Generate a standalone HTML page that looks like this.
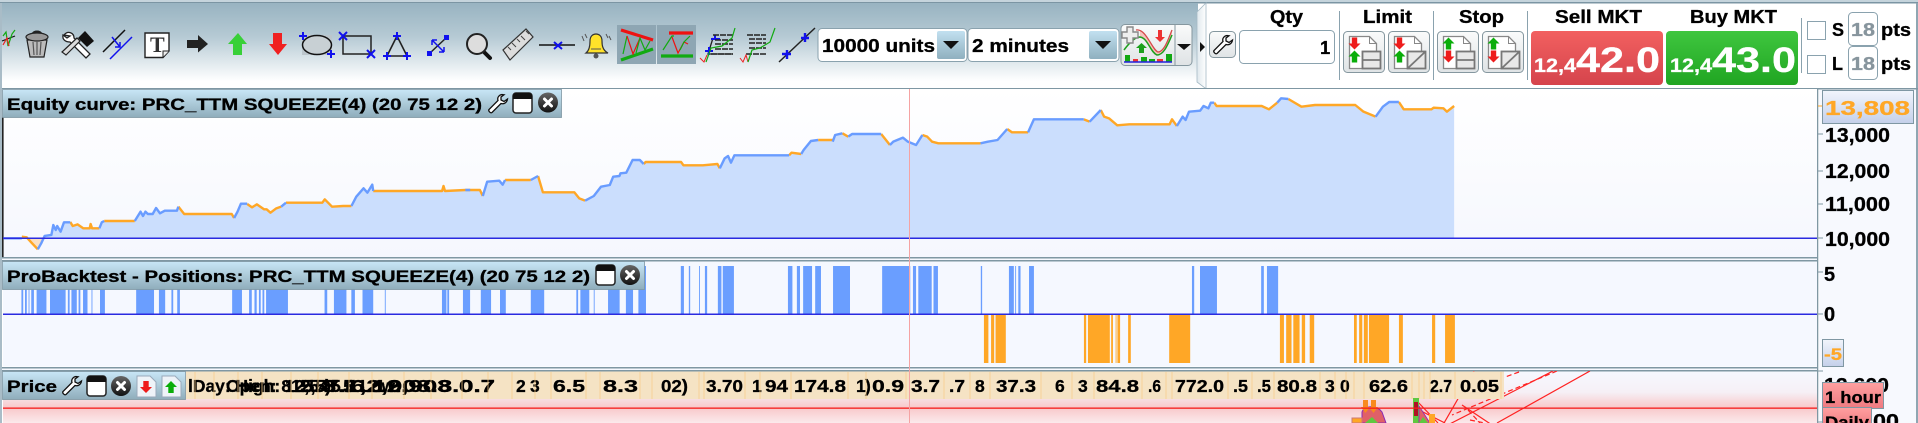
<!DOCTYPE html>
<html><head><meta charset="utf-8"><title>Equity curve</title>
<style>
html,body{margin:0;padding:0;background:#fff;width:1918px;height:423px;overflow:hidden}
svg{display:block}
text{font-family:"Liberation Sans",sans-serif;font-weight:bold;fill:#000;stroke:#000;stroke-width:.3}
</style></head><body>
<svg xmlns="http://www.w3.org/2000/svg" width="1918" height="423" viewBox="0 0 1918 423">
<defs>
<linearGradient id="tb" x1="0" y1="0" x2="0" y2="1"><stop offset="0" stop-color="#98b3c1"/><stop offset=".4" stop-color="#b6cad4"/><stop offset=".72" stop-color="#e3ebef"/><stop offset=".92" stop-color="#fff"/></linearGradient>
<linearGradient id="tt" x1="0" y1="0" x2="0" y2="1"><stop offset="0" stop-color="#c8e6f6"/><stop offset="1" stop-color="#8fadbb"/></linearGradient>
<linearGradient id="p1" x1="0" y1="0" x2="0" y2="1"><stop offset="0" stop-color="#fff"/><stop offset="1" stop-color="#f5f7fe"/></linearGradient>
<linearGradient id="p3" x1="0" y1="0" x2="0" y2="1"><stop offset="0" stop-color="#f6f8ff"/><stop offset=".4" stop-color="#f6f0f6"/><stop offset=".7" stop-color="#f8c8ca"/><stop offset="1" stop-color="#fbeaec"/></linearGradient>
<linearGradient id="sell" x1="0" y1="0" x2="0" y2="1"><stop offset="0" stop-color="#f26060"/><stop offset="1" stop-color="#d5444c"/></linearGradient>
<linearGradient id="buy" x1="0" y1="0" x2="0" y2="1"><stop offset="0" stop-color="#3fc63f"/><stop offset="1" stop-color="#20a522"/></linearGradient>
<linearGradient id="ax" x1="0" y1="0" x2="0" y2="1"><stop offset="0" stop-color="#f2f5fc"/><stop offset="1" stop-color="#c4d0ea"/></linearGradient>
<linearGradient id="hr" x1="0" y1="0" x2="0" y2="1"><stop offset="0" stop-color="#ffa0a0"/><stop offset="1" stop-color="#ee7a80"/></linearGradient>
<linearGradient id="btn" x1="0" y1="0" x2="0" y2="1"><stop offset="0" stop-color="#fafbfb"/><stop offset="1" stop-color="#dfe3e5"/></linearGradient>
<linearGradient id="sel" x1="0" y1="0" x2="0" y2="1"><stop offset="0" stop-color="#c2e0f0"/><stop offset="1" stop-color="#8fb0bf"/></linearGradient>
<linearGradient id="tab" x1="0" y1="0" x2="1" y2="0"><stop offset="0" stop-color="#dfe8ed"/><stop offset="1" stop-color="#fff"/></linearGradient>
<linearGradient id="ball" x1="0" y1="0" x2="0" y2="1"><stop offset="0" stop-color="#666"/><stop offset="1" stop-color="#111"/></linearGradient>
<clipPath id="pc"><rect x="3" y="371" width="1814" height="52"/></clipPath>

<g id="wrench"><path d="M15 1.5 C12 2 10 4.5 11 7.5 L2 16.5 C1 18 3.5 20.5 5 19.5 L14 10.5 C17 11.5 20 9.5 20.5 6 L17 8.5 L14 7 L14 4 L17 1.8 Z" fill="#fff" stroke="#111" stroke-width="1.3"/></g>
<g id="win"><rect x="1" y="1" width="19" height="20" rx="3" fill="#fff" stroke="#222" stroke-width="1.5"/><path d="M1 7V4a3 3 0 0 1 3-3h13a3 3 0 0 1 3 3v3z" fill="#111"/></g>
<g id="cls"><circle r="10" fill="url(#ball)"/><path d="M-3.5-3.5 3.5 3.5M3.5-3.5-3.5 3.5" stroke="#fff" stroke-width="3" stroke-linecap="round"/></g>
<g id="up"><path d="M0-6 6 0H2.7V6H-2.7V0H-6Z" fill="#0aad0a"/></g>
<g id="dn"><path d="M0 6 6 0H2.7V-6H-2.7V0H-6Z" fill="#ee1c1c"/></g>
<g id="docb"><rect x="0" y="0" width="41" height="41" rx="4" fill="url(#btn)" stroke="#85979f"/><path d="M6 5H26L33 12V20H19V37H6Z" fill="#fff" stroke="#888" stroke-width="1.3"/><path d="M26 5V12H33" fill="none" stroke="#888"/></g>
<g id="box1"><rect x="19" y="20" width="18" height="17" fill="#e8e8e8" stroke="#777" stroke-width="1.8"/><path d="M19 28.5H37" stroke="#777" stroke-width="1.8"/></g>
<g id="box2"><rect x="19" y="20" width="18" height="17" fill="#e8e8e8" stroke="#777" stroke-width="1.8"/><path d="M19 37 37 20" stroke="#777" stroke-width="1.8"/></g>
</defs>

<!-- toolbar -->
<rect x="0" y="0" width="1918" height="423" fill="#fff"/>
<rect x="0" y="0" width="1918" height="2" fill="#c5d4dc"/>
<rect x="0" y="2" width="1918" height="1.5" fill="#7b95a3"/>
<rect x="0" y="3" width="1198" height="85" fill="url(#tb)"/>
<rect x="0" y="3" width="2" height="420" fill="#a9bcc7"/>
<rect x="1916" y="3" width="2" height="420" fill="#8fa6b2"/>
<rect x="1819" y="88" width="97" height="335" fill="#f7f9fe"/>

<!-- icons -->
<path d="M2 41 15 36" stroke="#111" stroke-width="1.2"/><path d="M3 36 6 32 8 46 12 34 15 30" fill="none" stroke="#1a1" stroke-width="1.2"/><path d="M3 45 7 38 9 46" fill="none" stroke="#e22" stroke-width="1.2"/>
<g stroke="#222" stroke-width="1.2"><path d="M27 40 30 57H44L47 40Z" fill="#bbb"/><ellipse cx="37" cy="37" rx="11" ry="4" fill="#999"/><path d="M33 33.5A4 2 0 0 1 41 33.5" fill="none" stroke-width="2"/><path d="M33 42 34 55M37 42V55M41 42 40 55" stroke="#555"/></g>
<g><path d="M64 35C68 30 74 33 74 38L90 54 86 58 70 42C66 42 62 40 63 35L67 38 70 36Z" fill="#fff" stroke="#222" stroke-width="1.3"/><path d="M66 55 80 41 77 38 62 52Z" fill="#ddd" stroke="#222" stroke-width="1.2"/><path d="M78 38 85 31 94 41 87 47Z" fill="#111"/></g>
<path d="M103 52 125 30" stroke="#111" stroke-width="1.5"/><path d="M110 59 132 37" stroke="#11e" stroke-width="1.5"/><path d="M112 37 120 47M115 47H120V42" fill="none" stroke="#11e" stroke-width="1.5"/>
<path d="M145 33H169V51L163 57.5H145Z" fill="#fff" stroke="#222" stroke-width="1.4"/><path d="M163 57V51H169" fill="#eee" stroke="#222"/><text x="150" y="52" style="font-family:'Liberation Serif',serif;fill:#333;stroke:none" font-size="22">T</text>
<path d="M187 40H198V35L208 44 198 52.5V48H187Z" fill="#222"/>
<path d="M238 33 247 44H242V55H233V44H228Z" fill="#38d038"/>
<path d="M278 55 287 44H282V33H273V44H269Z" fill="#f02020"/>
<rect x="302" y="35" width="30" height="20" fill="#bcc6cc"/><ellipse cx="317" cy="45" rx="14.5" ry="9.5" fill="#c8d0d4" stroke="#111" stroke-width="1.5"/><path d="M299 36H307M303 32V40M327 54H335M331 50V58" stroke="#11e" stroke-width="2"/>
<rect x="343" y="36" width="28" height="18" fill="none" stroke="#222" stroke-width="1.5"/><path d="M339 32 347 40M347 32 339 40M367 50 375 58M375 50 367 58" stroke="#11e" stroke-width="2"/>
<path d="M397 36 387 56H407Z" fill="none" stroke="#222" stroke-width="1.6"/><path d="M393 36H401M397 32V40M383 56H391M387 52V60M403 56H411M407 52V60" stroke="#11e" stroke-width="2"/>
<path d="M430 53 446 38" stroke="#222" stroke-width="1.5"/><rect x="427" y="51" width="5" height="5" fill="#11e"/><rect x="444" y="35" width="5" height="5" fill="#11e"/><path d="M432 40 444 52M432 40V45M432 40H437M444 52V47M444 52H439" fill="none" stroke="#11e" stroke-width="1.5"/>
<path d="M484 52 490 58" stroke="#111" stroke-width="4" stroke-linecap="round"/><circle cx="477" cy="44" r="10" fill="#ddd" stroke="#222" stroke-width="2"/>
<path d="M503 50 526 29 533 37 510 60Z" fill="#ddd" stroke="#333" stroke-width="1.2"/><path d="M508 47 511 50M512 43 516 47M517 39 520 42M521 36 525 40M526 31 529 34" stroke="#444"/>
<path d="M539 45H575" stroke="#111" stroke-width="1.5"/><path d="M554 42 562 49M562 42 554 49" stroke="#11e" stroke-width="2"/>
<path d="M586 53C590 50 590 44 590 41C590 36 593 34 596 34C599 34 602 36 602 41C602 44 602 50 608 53Z" fill="#ffe22a" stroke="#333" stroke-width="1.2"/><circle cx="596" cy="56" r="2.5" fill="#555"/><path d="M591 49H601" stroke="#555"/><path d="M582 36 584 41M585 34 587 38M609 36 611 40M606 34 608 38" stroke="#555"/>
<rect x="617" y="25" width="39" height="39" fill="#8ea6b3"/><rect x="657" y="25" width="39" height="39" fill="#8ea6b3"/>
<path d="M621 30 653 40" stroke="#ee1111" stroke-width="3.2"/><path d="M621 60 653 49" stroke="#11aa11" stroke-width="3.2"/><path d="M623 54 627 36" stroke="#11aa11" stroke-width="1.2"/><path d="M627 36 633 54 640 38" fill="none" stroke="#ee1111" stroke-width="1.2"/><path d="M636 53 640 38 645 50 650 41" fill="none" stroke="#11aa11" stroke-width="1.2"/>
<path d="M669 33H693" stroke="#ee1111" stroke-width="3.2"/><path d="M661 56H693" stroke="#11aa11" stroke-width="3.2"/><path d="M663 50 672 36 674 36" fill="none" stroke="#11aa11" stroke-width="1.2"/><path d="M672 37 678 53 684 42 688 44" fill="none" stroke="#ee1111" stroke-width="1.2"/><path d="M680 50 684 42 690 36" fill="none" stroke="#11aa11" stroke-width="1.2"/>
<g><path d="M713 38 708 54H733" fill="none" stroke="#222" stroke-width="1.3"/><path d="M711 39H719M705 51H713M709 47V55M706 51H713" stroke="#11e" stroke-width="2"/><path d="M715 39V35M711 39H720" stroke="#11e" stroke-width="2"/><path d="M713 35H733M715 40H733M715 44H733M715 49H733M711 54H733" stroke="#222" stroke-width="1.4" stroke-dasharray="6 1"/><path d="M700 58 704 62 707 55" fill="none" stroke="#e22"/><path d="M706 62 711 48 722 46 732 38 735 28" fill="none" stroke="#1a1" stroke-width="1.2"/></g>
<g><path d="M747 35H766M749 39H766M749 43H766M749 48H766M746 54H767" stroke="#222" stroke-width="1.4" stroke-dasharray="6 1"/><path d="M740 58 743 62 746 55 748 62" fill="none" stroke="#e22"/><path d="M748 62 752 50 760 48 770 42 775 28" fill="none" stroke="#1a1" stroke-width="1.2"/></g>
<path d="M779 62 815 28" stroke="#222" stroke-width="1.5"/><path d="M782 54H791M787 50V59M801 38H809M805 33V42" stroke="#11e" stroke-width="2.4"/>

<!-- selects -->
<rect x="818" y="28.5" width="149" height="33" rx="4" fill="#fff" stroke="#8aa2ae"/>
<rect x="937" y="31" width="28" height="28" rx="2" fill="url(#sel)"/><path d="M943 41H959L951 49Z" fill="#111"/>
<text x="822" y="52" font-size="18.5" textLength="113" lengthAdjust="spacingAndGlyphs">10000 units</text>
<rect x="968" y="28.5" width="151" height="33" rx="4" fill="#fff" stroke="#8aa2ae"/>
<rect x="1089" y="31" width="28" height="28" rx="2" fill="url(#sel)"/><path d="M1095 41H1111L1103 49Z" fill="#111"/>
<text x="972" y="52" font-size="18.5" textLength="97" lengthAdjust="spacingAndGlyphs">2 minutes</text>
<rect x="1121" y="24.5" width="71" height="41" rx="4" fill="url(#btn)" stroke="#85979f"/><path d="M1175 25V65" stroke="#85979f"/>
<path d="M1140 30C1146 30 1152 50 1158 52 1164 52 1168 40 1172 30V35C1168 44 1164 55 1157 55 1150 52 1146 38 1140 37Z" fill="#f4c4be"/>
<path d="M1136 30C1146 28 1152 50 1158 52 1164 52 1168 40 1172 30" fill="none" stroke="#d64a4a" stroke-width="1.3"/>
<path d="M1124 50C1130 42 1135 37 1140 37 1148 38 1150 52 1157 55 1164 55 1168 44 1172 35" fill="none" stroke="#1ea01e" stroke-width="1.5"/>
<path d="M1127 27H1133V32H1138V38H1133V43H1127V38H1122V32H1127Z" fill="#eee" stroke="#888" stroke-width="1.4"/>
<path d="M1158 30H1162V37H1165L1160 42 1155 37H1158Z" fill="#e33"/><path d="M1141.5 43 1147 48H1144V53H1139V48H1136Z" fill="#1ca01c"/>
<rect x="1125" y="55" width="5" height="7" fill="#12a812"/><rect x="1133" y="59" width="5" height="3" fill="#e33"/><rect x="1141" y="57" width="6" height="5" fill="#12a812"/><rect x="1149" y="59" width="6" height="3" fill="#12a812"/><rect x="1157" y="59" width="6" height="3" fill="#e33"/><rect x="1166" y="54" width="6" height="8" fill="#12a812"/>
<path d="M1124 62H1172" stroke="#22d" stroke-width="1.4"/>
<path d="M1177 44H1191L1184 50Z" fill="#111"/>

<!-- order panel -->
<path d="M1206 3V88H1205L1197 82V12L1206 3Z" fill="url(#tab)" stroke="#a5bac5" stroke-width=".8"/>
<path d="M1200 42 1205 47 1200 52Z" fill="#111"/>
<rect x="1209.5" y="31.5" width="26" height="26" rx="4" fill="url(#btn)" stroke="#85979f"/>
<use href="#wrench" x="1212" y="34"/>
<text x="1270" y="23" font-size="18" textLength="33" lengthAdjust="spacingAndGlyphs">Qty</text>
<rect x="1239.5" y="30.5" width="95" height="33" rx="4" fill="#fff" stroke="#8aa2ae"/>
<text x="1320" y="54" font-size="18.5">1</text>
<path d="M1339.5 11V80M1433.5 11V80M1527.5 11V80" stroke="#8aa2ae"/>
<text x="1363" y="23" font-size="18" textLength="49" lengthAdjust="spacingAndGlyphs">Limit</text>
<text x="1459" y="23" font-size="18" textLength="45" lengthAdjust="spacingAndGlyphs">Stop</text>
<g transform="translate(1343.5,31.5)"><use href="#docb"/><use href="#box1"/><use href="#dn" x="11" y="12"/><use href="#up" x="11" y="25"/></g>
<g transform="translate(1388.5,31.5)"><use href="#docb"/><use href="#box2"/><use href="#dn" x="11" y="12"/><use href="#up" x="11" y="25"/></g>
<g transform="translate(1437.5,31.5)"><use href="#docb"/><use href="#box1"/><use href="#up" x="11" y="12"/><use href="#dn" x="11" y="25"/></g>
<g transform="translate(1482.5,31.5)"><use href="#docb"/><use href="#box2"/><use href="#up" x="11" y="12"/><use href="#dn" x="11" y="25"/></g>
<text x="1555" y="23" font-size="18" textLength="87" lengthAdjust="spacingAndGlyphs">Sell MKT</text>
<text x="1690" y="23" font-size="18" textLength="87" lengthAdjust="spacingAndGlyphs">Buy MKT</text>
<rect x="1531" y="31" width="132" height="54" rx="4" fill="url(#sell)"/>
<rect x="1666" y="31" width="132" height="54" rx="4" fill="url(#buy)"/>
<text x="1534" y="72" font-size="19" style="fill:#fff;stroke:#fff" textLength="42" lengthAdjust="spacingAndGlyphs">12,4</text>
<text x="1576" y="72" font-size="35" style="fill:#fff;stroke:#fff" textLength="84" lengthAdjust="spacingAndGlyphs">42.0</text>
<text x="1670" y="72" font-size="19" style="fill:#fff;stroke:#fff" textLength="42" lengthAdjust="spacingAndGlyphs">12,4</text>
<text x="1712" y="72" font-size="35" style="fill:#fff;stroke:#fff" textLength="84" lengthAdjust="spacingAndGlyphs">43.0</text>
<path d="M1801.5 18V73" stroke="#8aa2ae"/>
<rect x="1807.5" y="21.5" width="18" height="18" fill="#fff" stroke="#8aa2ae"/><rect x="1807.5" y="55.5" width="18" height="18" fill="#fff" stroke="#8aa2ae"/>
<text x="1832" y="36" font-size="18">S</text><text x="1832" y="70" font-size="18">L</text>
<rect x="1848.5" y="12.5" width="29" height="33" rx="4" fill="#fff" stroke="#8aa2ae"/><rect x="1848.5" y="46.5" width="29" height="33" rx="4" fill="#fff" stroke="#8aa2ae"/>
<text x="1851" y="36" font-size="18" style="fill:#87959d;stroke:#87959d" textLength="24" lengthAdjust="spacingAndGlyphs">18</text><text x="1851" y="70" font-size="18" style="fill:#87959d;stroke:#87959d" textLength="24" lengthAdjust="spacingAndGlyphs">18</text>
<text x="1881" y="36" font-size="18" textLength="30" lengthAdjust="spacingAndGlyphs">pts</text><text x="1881" y="70" font-size="18" textLength="30" lengthAdjust="spacingAndGlyphs">pts</text>

<!-- panel 1 -->
<rect x="2" y="88" width="1916" height="1.5" fill="#7f97a3"/>
<rect x="2" y="89" width="1815" height="168" fill="url(#p1)"/>
<rect x="2" y="117" width="1.6" height="140" fill="#222"/>
<g transform="translate(0,90) scale(.48473,.33333)" fill="none" stroke-linejoin="round">
<path d="M8 445H45V440L55 442 65 458 78 478 85 460 92 438 106 435 110 405 115 420 118 408 125 425 132 397H145L150 408 160 403 172 415H185L187 402 190 415H205L210 397 215 393H278L290 365 295 378 300 365 305 372H315L322 354 330 370 340 362H365L368 350 380 372H478L483 384 490 365 497 341H510L520 352 530 343 545 358H550L558 368 570 355 580 350 590 338H665L670 328 685 350 708 348H725L735 320 750 295 758 308 768 284 770 303H912L915 288 918 303 960 300H990L996 318 1005 275 1030 272 1037 284 1042 270H1095L1110 258 1120 307H1185L1195 325 1207 332 1225 318 1240 290 1258 285 1265 260 1278 258 1280 250 1292 248 1305 210H1320L1328 222 1332 216H1405L1410 226H1450L1480 222 1485 235 1495 205 1502 198 1508 218 1515 196H1568V445Z" fill="#cbdefd"/>
<path d="M45 445V440L55 442 65 458 78 478 85 460 90 445Z" fill="#fae0c4"/>
</g>
<g transform="translate(760,90) scale(.48473,.33333)" fill="none" stroke-linejoin="round">
<path d="M0 196H60L65 188 85 192 90 180 105 153 120 150H150L155 135 170 130 182 140 190 132H250L268 165 275 155 295 143 305 155 322 165 335 135 345 140 355 155 368 160H455L470 155 490 150 510 117 520 127H553L565 88H668L680 95 703 60 710 80 720 85 737 106 762 103H845L850 88 860 108 872 80 878 90 885 65 908 62 915 48 925 55 930 38H937L942 48H1035L1050 58 1067 38 1075 25 1090 27 1117 50 1145 45H1228L1245 65 1270 80 1285 50 1298 36H1318L1328 58H1385L1390 53 1410 55 1417 65 1432 48V445H0Z" fill="#cbdefd"/>
<path vector-effect="non-scaling-stroke" stroke="#ffa726" stroke-width="2.4" d="M60 196 65 188 85 192M120 150H150M170 130 182 140M250 132 268 165M335 135 345 140 355 155 368 160H455M510 117 520 127H553M668 88 680 95M703 60 710 80 720 85 737 106 762 103H845L850 88 860 108M937 38 942 48H1035L1050 58 1067 38M1090 27 1117 50 1145 45H1228L1245 65 1270 80M1318 36 1328 58H1385L1390 53 1410 55 1417 65 1432 48"/>
<path vector-effect="non-scaling-stroke" stroke="#699cff" stroke-width="2.4" d="M0 196H60M85 192 90 180 105 153 120 150M150 155 155 135 170 130M182 140 190 132H250M268 165 275 155 295 143 305 155 322 165 335 135M455 160 470 155 490 150 510 117M553 127 565 88H668M680 95 703 60M860 108 872 80 878 90 885 65 908 62 915 48 925 55 930 38H937M1067 38 1075 25 1090 27M1270 80 1285 50 1298 36H1318"/>
</g>
<g transform="translate(0,90) scale(.48473,.33333)" fill="none" stroke-linejoin="round">
<path vector-effect="non-scaling-stroke" stroke="#ffa726" stroke-width="2.4" d="M45 440 55 442 65 458 78 478M145 396 150 408 160 403 172 415H185L187 402 190 415H205M215 393H278M368 350 380 372H478L483 384M510 342 520 352 530 343 545 358H550L558 368 570 355 580 350M590 338H665L670 328 685 350 708 348H725M770 303H912L915 288 918 303 960 300H990L996 318M1042 270H1095M1110 258 1120 307H1185L1195 325 1207 332M1328 222 1332 216H1405L1410 226H1450L1480 222 1485 235"/>
<path vector-effect="non-scaling-stroke" stroke="#699cff" stroke-width="2.4" d="M8 445H45M78 478 85 460 92 438 106 435 110 405 115 420 118 408 125 425 132 397H145M205 415 210 397 215 393M278 393 290 365 295 378 300 365 305 372H315L322 354 330 370 340 362H365L368 350M483 384 490 365 497 341H510M580 350 590 338M725 348 735 320 750 295 758 308 768 284 770 303M960 300H970M996 318 1005 275 1030 272 1037 284 1042 270M1095 270 1110 258M1207 332 1225 318 1240 290 1258 285 1265 260 1278 258 1280 250 1292 248 1305 210H1320L1328 222M1485 235 1495 205 1502 198 1508 218 1515 196H1568"/>
</g>
<rect x="3" y="237.5" width="1814" height="1.5" fill="#2a2ae0"/>
<rect x="2" y="257" width="1815" height="1.5" fill="#7f97a3"/>
<rect x="2" y="258.5" width="1815" height="1.5" fill="#f6f8fe"/>

<!-- panel 2 -->
<rect x="2" y="260" width="1815" height="1.5" fill="#7f97a3"/>
<rect x="3" y="261.5" width="1814" height="105" fill="#f5f8ff"/>
<path transform="translate(0,266) scale(.44643,1)" fill="#6a9eff" d="M48 0H52V48H48ZM56 0H60V48H56ZM64 0H66V48H64ZM70 0H76V48H70ZM82 0H104V48H82ZM112 0H147V48H112ZM152 0H156V48H152ZM160 0H172V48H160ZM176 0H180V48H176ZM186 0H196V48H186ZM205 0H207V48H205ZM224 0H235V48H224ZM305 0H345V48H305ZM356 0H370V48H356ZM384 0H388V48H384ZM397 0H403V48H397ZM520 0H542V48H520ZM558 0H564V48H558ZM570 0H575V48H570ZM580 0H584V48H580ZM588 0H592V48H588ZM596 0H645V48H596ZM727 0H733V48H727ZM748 0H776V48H748ZM787 0H795V48H787ZM812 0H836V48H812ZM862 0H864V48H862ZM990 0H1000V48H990ZM1002 0H1006V48H1002ZM1037 0H1053V48H1037ZM1077 0H1100V48H1077ZM1120 0H1133V48H1120ZM1189 0H1219V48H1189ZM1291 0H1295V48H1291ZM1300 0H1320V48H1300ZM1330 0H1332V48H1330ZM1362 0H1388V48H1362ZM1402 0H1418V48H1402ZM1430 0H1447V48H1430Z"/>
<path transform="translate(650,266) scale(.44643,1)" fill="#6a9eff" d="M69 0H76V48H69ZM87 0H90V48H87ZM110 0H112V48H110ZM123 0H128V48H123ZM152 0H160V48H152ZM163 0H188V48H163ZM309 0H319V48H309ZM329 0H336V48H329ZM343 0H363V48H343ZM370 0H383V48H370ZM410 0H448V48H410ZM520 0H583V48H520ZM589 0H596V48H589ZM601 0H631V48H601ZM635 0H645V48H635ZM741 0H744V48H741ZM804 0H815V48H804ZM818 0H820V48H818ZM825 0H830V48H825ZM849 0H860V48H849ZM1214 0H1219V48H1214ZM1232 0H1270V48H1232ZM1369 0H1375V48H1369ZM1382 0H1407V48H1382Z"/>
<path transform="translate(650,315) scale(.44643,1)" fill="#ffa726" d="M748 0H758V48H748ZM764 0H771V48H764ZM774 0H797V48H774ZM972 0H977V48H972ZM981 0H1030V48H981ZM1033 0H1037V48H1033ZM1043 0H1045V48H1043ZM1047 0H1053V48H1047ZM1071 0H1077V48H1071ZM1163 0H1210V48H1163ZM1411 0H1420V48H1411ZM1425 0H1437V48H1425ZM1441 0H1455V48H1441ZM1460 0H1467V48H1460ZM1478 0H1487V48H1478Z"/>
<path transform="translate(1300,315) scale(.39417,1)" fill="#ffa726" d="M5 0H13V48H5ZM25 0H36V48H25ZM137 0H144V48H137ZM150 0H158V48H150ZM162 0H172V48H162ZM175 0H226V48H175ZM251 0H261V48H251ZM335 0H343V48H335ZM368 0H393V48H368Z"/>
<rect x="3" y="313.5" width="1814" height="1.5" fill="#2a2ae0"/>
<rect x="2" y="367" width="1815" height="1.5" fill="#7f97a3"/>
<rect x="2" y="368.5" width="1815" height="1.5" fill="#f6f8fe"/>

<!-- panel 3 -->
<rect x="2" y="370" width="1815" height="1.5" fill="#7f97a3"/>
<rect x="3" y="371.5" width="1814" height="51.5" fill="url(#p3)"/>
<g clip-path="url(#pc)" fill="none" stroke="#f22" stroke-width="1.2">
<path d="M1474 371 1440 430M1553 371 1438 430M1590 371 1497 423M1462 405 1492 425"/>
<path d="M1557 371 1452 415M1519 372 1497 380M1470 420 1485 423M1468 410 1480 423" stroke-dasharray="5 3"/>
<path d="M1416 400 1438 423M1419 410 1445 423"/>
</g>
<rect x="186" y="371.5" width="1318" height="27.5" fill="#f5e3c4"/>
<g font-size="17.5">
<text x="188" y="392" textLength="165" lengthAdjust="spacingAndGlyphs">lDay: High: 12,547.5</text>
<text x="226" y="392" textLength="175" lengthAdjust="spacingAndGlyphs">Open: 812,5)5.8 Low:</text>
<text x="300" y="392" textLength="195" lengthAdjust="spacingAndGlyphs">5.8 .6 12,903 0.7</text>
<text x="345" y="392" textLength="150" lengthAdjust="spacingAndGlyphs">1,2,908.8.0.7</text>
<text x="516" y="392">2</text><text x="530" y="392">3</text>
<text x="553" y="392" textLength="32" lengthAdjust="spacingAndGlyphs">6.5</text>
<text x="603" y="392" textLength="35" lengthAdjust="spacingAndGlyphs">8.3</text>
<text x="661" y="392" textLength="27" lengthAdjust="spacingAndGlyphs">02)</text>
<text x="706" y="392" textLength="37" lengthAdjust="spacingAndGlyphs">3.70</text>
<text x="752" y="392">1</text>
<text x="765" y="392" textLength="23" lengthAdjust="spacingAndGlyphs">94</text>
<text x="794" y="392" textLength="52" lengthAdjust="spacingAndGlyphs">174.8</text>
<text x="856" y="392">1</text><text x="865" y="392">)</text>
<text x="872" y="392" textLength="32" lengthAdjust="spacingAndGlyphs">0.9</text>
<text x="911" y="392" textLength="29" lengthAdjust="spacingAndGlyphs">3.7</text>
<text x="949" y="392" textLength="16" lengthAdjust="spacingAndGlyphs">.7</text>
<text x="975" y="392">8</text>
<text x="996" y="392" textLength="40" lengthAdjust="spacingAndGlyphs">37.3</text>
<text x="1055" y="392">6</text><text x="1078" y="392">3</text>
<text x="1096" y="392" textLength="43" lengthAdjust="spacingAndGlyphs">84.8</text>
<text x="1148" y="392" textLength="13" lengthAdjust="spacingAndGlyphs">.6</text>
<text x="1175" y="392" textLength="49" lengthAdjust="spacingAndGlyphs">772.0</text>
<text x="1233" y="392" textLength="15" lengthAdjust="spacingAndGlyphs">.5</text>
<text x="1257" y="392" textLength="14" lengthAdjust="spacingAndGlyphs">.5</text>
<text x="1277" y="392" textLength="40" lengthAdjust="spacingAndGlyphs">80.8</text>
<text x="1325" y="392">3</text><text x="1340" y="392">0</text>
<text x="1369" y="392" textLength="39" lengthAdjust="spacingAndGlyphs">62.6</text>
<text x="1430" y="392" textLength="22" lengthAdjust="spacingAndGlyphs">2.7</text>
<text x="1460" y="392" textLength="39" lengthAdjust="spacingAndGlyphs">0.05</text>
</g>
<g stroke="#f8cd88" stroke-width="1" opacity=".75"><path d="M195 372V399M214 372V399M238 372V399M262 372V399M291 372V399M318 372V399M349 372V399M372 372V399M404 372V399M431 372V399M462 372V399M488 372V399M512 372V399M535 372V399M551 372V399M586 372V399M600 372V399M640 372V399M652 372V399M699 372V399M704 372V399M745 372V399M760 372V399M791 372V399M848 372V399M866 372V399M906 372V399M944 372V399M970 372V399M990 372V399M1041 372V399M1072 372V399M1094 372V399M1142 372V399M1166 372V399M1172 372V399M1228 372V399M1252 372V399M1274 372V399M1320 372V399M1335 372V399M1346 372V399M1354 372V399M1364 372V399M1412 372V399M1419 372V399M1424 372V399M1430 372V399M1455 372V399M1501 372V399"/></g>
<!-- candles -->
<g clip-path="url(#pc)">
<path d="M1362 423V412C1364 406 1376 404 1382 412L1386 423Z" fill="#e06068" stroke="#8a2ab5" stroke-width="1"/>
<path d="M1352 418H1362V423H1352Z" fill="#ffa726" stroke="#c77"/>
<path d="M1363 400H1368V407H1370L1365.5 413 1361 407H1363ZM1371 400H1376V407H1378L1373.5 413 1369 407H1371Z" fill="#f98a1e"/>
<path d="M1365 423 1372 417 1378 423Z" fill="#5fc840"/>
<rect x="1413" y="398" width="6" height="25" fill="#5fc840"/><rect x="1414" y="402" width="4" height="14" fill="#b01024"/>
<path d="M1419 406 1430 423H1419Z" fill="#e06068" stroke="#8a2ab5" stroke-width=".8"/>
<path d="M1423 417 1428 423H1419Z" fill="#5fc840"/>
<rect x="1429" y="414" width="6" height="9" fill="#ffa726"/>
</g>
<rect x="3" y="407.5" width="1814" height="1.3" fill="#f51c1c"/>

<!-- crosshair -->
<rect x="909" y="89" width="1" height="334" fill="#f5a3a3"/>

<!-- title bars -->
<rect x="2.5" y="89.5" width="559" height="28" fill="url(#tt)" stroke="#7f97a3" stroke-width=".8"/>
<text x="7" y="110" font-size="17" textLength="475" lengthAdjust="spacingAndGlyphs">Equity curve: PRC_TTM SQUEEZE(4) (20 75 12 2)</text>
<use href="#wrench" x="487" y="93"/><use href="#win" x="512" y="92"/><use href="#cls" x="548" y="102.5"/>
<rect x="2.5" y="261.5" width="642" height="28" fill="url(#tt)" stroke="#7f97a3" stroke-width=".8"/>
<text x="7" y="282" font-size="17" textLength="583" lengthAdjust="spacingAndGlyphs">ProBacktest - Positions: PRC_TTM SQUEEZE(4) (20 75 12 2)</text>
<use href="#win" x="595" y="264"/><use href="#cls" x="630" y="275"/>
<rect x="2.5" y="371.5" width="183" height="28" fill="url(#tt)" stroke="#7f97a3" stroke-width=".8"/>
<text x="7" y="392" font-size="17" textLength="50" lengthAdjust="spacingAndGlyphs">Price</text>
<use href="#wrench" x="61" y="375"/><use href="#win" x="86" y="375"/><use href="#cls" x="121" y="386"/>
<g><path d="M137 376H150L156 382V397H137Z" fill="#eef3f8" stroke="#9ab"/><use href="#dn" x="146" y="387"/><path d="M162 376H175L181 382V397H162Z" fill="#eef3f8" stroke="#9ab"/><use href="#up" x="171" y="387"/></g>

<!-- axis -->
<rect x="1817" y="88" width="1.3" height="335" fill="#7f97a3"/>
<path d="M1818 106H1822" stroke="#ffa726"/>
<path d="M1818 134H1823M1818 171H1823M1818 204H1823M1818 238H1823M1818 272H1823M1818 314H1823M1818 371H1823M1818 422H1823" stroke="#7f97a3"/>
<rect x="1822.5" y="90.5" width="91" height="33" fill="url(#ax)" stroke="#7f97a3"/>
<text x="1825" y="115" font-size="20" style="fill:#ffa726;stroke:#ffa726" textLength="85" lengthAdjust="spacingAndGlyphs">13,808</text>
<g font-size="20">
<text x="1825" y="142" textLength="65" lengthAdjust="spacingAndGlyphs">13,000</text>
<text x="1825" y="178" textLength="65" lengthAdjust="spacingAndGlyphs">12,000</text>
<text x="1825" y="211" textLength="65" lengthAdjust="spacingAndGlyphs">11,000</text>
<text x="1825" y="246" textLength="65" lengthAdjust="spacingAndGlyphs">10,000</text>
<text x="1824" y="281">5</text><text x="1824" y="321">0</text>
<text x="1824" y="392" textLength="65" lengthAdjust="spacingAndGlyphs">12,600</text>
</g>
<rect x="1822.5" y="339.5" width="21" height="27" fill="url(#ax)" stroke="#7f97a3"/>
<text x="1824" y="360" font-size="17" style="fill:#ffa726;stroke:#ffa726" textLength="18" lengthAdjust="spacingAndGlyphs">-5</text>
<rect x="1822.5" y="382.5" width="61" height="26" fill="url(#hr)" stroke="#7f97a3"/>
<text x="1825" y="403" font-size="17" textLength="56" lengthAdjust="spacingAndGlyphs">1 hour</text>
<rect x="1822.5" y="407.5" width="49" height="20" fill="url(#hr)" stroke="#7f97a3"/>
<text x="1825" y="428" font-size="17" textLength="44" lengthAdjust="spacingAndGlyphs">Daily</text>
<text x="1873" y="428" font-size="20" textLength="26" lengthAdjust="spacingAndGlyphs">00</text>
</svg>
</body></html>
